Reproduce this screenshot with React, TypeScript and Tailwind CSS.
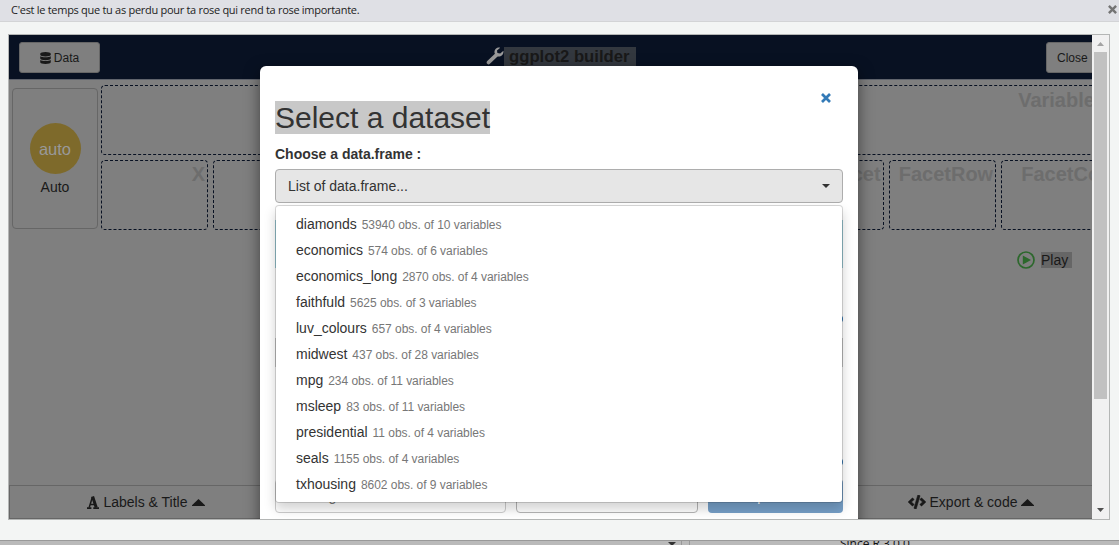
import React from "react";
import { FaDatabase, FaCode } from "react-icons/fa";

const datasets: [string, string][] = [
  ["diamonds", "53940 obs. of 10 variables"],
  ["economics", "574 obs. of 6 variables"],
  ["economics_long", "2870 obs. of 4 variables"],
  ["faithfuld", "5625 obs. of 3 variables"],
  ["luv_colours", "657 obs. of 4 variables"],
  ["midwest", "437 obs. of 28 variables"],
  ["mpg", "234 obs. of 11 variables"],
  ["msleep", "83 obs. of 11 variables"],
  ["presidential", "11 obs. of 4 variables"],
  ["seals", "1155 obs. of 4 variables"],
  ["txhousing", "8602 obs. of 9 variables"],
];

const slots = ["X", "Y", "Fill", "Color", "Size", "Group", "Facet", "FacetRow", "FacetCol"];

function Cross({ className }: { className: string }) {
  return (
    <svg viewBox="0 0 10 10" className={className} fill="none" stroke="currentColor" strokeWidth="2.7">
      <path d="M1 1L9 9M9 1L1 9" />
    </svg>
  );
}

function Triangle() {
  return (
    <svg viewBox="0 0 13 7" className="h-[7px] w-[13px]" fill="currentColor">
      <path d="M6.5 0L13 6.3V7H0V6.3Z" />
    </svg>
  );
}

function Wrench() {
  return (
    <svg viewBox="0 0 18 18" className="size-[18px] text-[#999]" fill="none" stroke="currentColor">
      <path d="M2.6 15.4L10.5 7.8" strokeWidth="3.8" strokeLinecap="round" />
      <path d="M14.2 0.7C11 -0.2 7.8 2.6 8.6 6.3L11.5 9.4C15 10.2 18 7.3 17.4 3.8L14.2 6.6L11.4 6L11 3.4Z" fill="currentColor" stroke="none" />
    </svg>
  );
}

function LetterGlyph() {
  return (
    <svg viewBox="0 0 12 13" className="h-[13px] w-3" fill="none" stroke="currentColor">
      <path d="M5.4 1L2.2 11.5M3.4 8.4H8" strokeWidth="1.5" />
      <path d="M5.6 0.5L9.2 11.5" strokeWidth="3" />
      <path d="M0 12.1H4.4M6.3 12.1H12" strokeWidth="1.7" />
    </svg>
  );
}

function PlayCircle() {
  return (
    <svg viewBox="0 0 18 18" className="mt-px size-[18px] text-[#2c682c]">
      <circle cx="9" cy="9" r="8" fill="none" stroke="currentColor" strokeWidth="1.7" />
      <path d="M5.8 4.6L14 9L5.8 13.6Z" fill="currentColor" />
    </svg>
  );
}

function Builder() {
  return (
    <div className="flex h-full w-[1110px] shrink-0 flex-col bg-[#7f7f7f] text-[14px] leading-5 text-[#191919]">
      <header className="flex h-[45px] shrink-0 items-start border-b border-[#5f636c] bg-[#081122] pt-[7px] pl-[10px]">
        <button className="flex h-[31px] w-[81px] items-center justify-center gap-[3px] rounded-[3px] border border-[#666] bg-[#7f7f7f] text-[12px]">
          <FaDatabase className="h-3 w-[11px]" />
          Data
        </button>
        <div className="ml-[386px] flex w-[150px] shrink-0 items-start pt-[5px]">
          <Wrench />
          <span className="h-5 w-[132px] bg-[#33383f] pl-[5px] text-[16.7px] leading-[19px] font-bold whitespace-nowrap">ggplot2 builder</span>
        </div>
        <button className="ml-[410px] flex h-[31px] w-[63px] items-center rounded-[3px] border border-[#666] bg-[#7f7f7f] pl-[10px] text-[12px]">Close</button>
      </header>
      <div className="flex gap-[3px] pt-[5px] pl-[3px]">
        <div className="mt-[3px] flex h-[141px] w-[86px] shrink-0 flex-col items-center rounded border border-[#666] pt-[34px]">
          <div className="flex size-[51px] items-center justify-center rounded-full bg-[#7e6a2b] text-[16.5px] text-[#999]">auto</div>
          <div className="mt-[3px]">Auto</div>
        </div>
        <div className="flex w-[1008px] flex-col gap-[5px] text-[20px] font-bold text-[#6d6d6d]">
          <div className="h-[70px] rounded border border-dashed border-[#081122] pt-[3px] text-right leading-[22px]">
            <span className="mr-[2px]">Variables</span>
          </div>
          <div className="flex gap-[5px]">
            {slots.map((s) => (
              <div key={s} className="h-[70px] w-[107.6px] shrink-0 rounded border border-dashed border-[#081122] pt-[2px] pr-[2px] text-right leading-[22px] first:w-[107px]">
                {s}
              </div>
            ))}
          </div>
        </div>
      </div>
      <div className="flex grow items-start pt-5 pl-[1008px]">
        <PlayCircle />
        <span className="mt-[2px] ml-[6px] h-4 bg-[#666] pr-1 leading-4">Play</span>
      </div>
      <footer className="flex h-[34px] shrink-0 border border-[#666]">
        <div className="flex w-[272px] items-center justify-center gap-[4.5px]">
          <LetterGlyph />Labels &amp; Title<Triangle />
        </div>
        <div className="grow" />
        <div className="mr-[20px] flex w-[254px] items-center justify-center gap-[4px]">
          <FaCode className="h-[14px] w-[18px]" stroke="currentColor" strokeWidth="20" />Export &amp; code<Triangle />
        </div>
      </footer>
    </div>
  );
}

function Modal() {
  return (
    <div className="absolute top-[31px] left-[251px] h-[620px] w-[598px] rounded-[6px] bg-white px-[15px] text-[14px] leading-5 text-[#333] shadow-[0_5px_15px_rgba(0,0,0,0.5)]">
      <div className="flex h-[35px] items-end justify-end pr-[12.5px]">
        <Cross className="mt-auto mb-[-2px] size-[10px] text-[#337ab7]" />
      </div>
      <h1 className="flex h-[33px]">
        <span className="bg-[#c8c8c8] text-[30px] leading-[33px]">Select a dataset</span>
      </h1>
      <div className="mt-[10px] mb-[5px] font-bold">Choose a data.frame :</div>
      <div className="relative">
        <button className="flex h-[34px] w-full items-center justify-between rounded border border-[#adadad] bg-[#e6e6e6] px-3">
          List of data.frame...
          <svg viewBox="0 0 8 4" className="h-1 w-2" fill="#333"><path d="M0 0H8L4 4Z" /></svg>
        </button>
        <div className="mt-[17px] h-[48px] border border-[#9fd0dc]" />
        <div className="mt-[47px] flex h-2 justify-end"><span className="h-2 w-2 rounded-full bg-[#337ab7]" /></div>
        <div className="mt-[15px] h-[29px] border border-[#ccc]" />
        <div className="mt-[91px] flex h-2 justify-end"><span className="h-2 w-2 rounded-full bg-[#337ab7]" /></div>
        <div className="mt-[13px] flex gap-[10px]">
          <button className="h-[34px] w-[231px] rounded border border-[#ccc] pl-3 text-left text-[#777]">Nothing selected</button>
          <button className="h-[34px] w-[182px] rounded border border-[#b5b5b5]" />
          <button className="h-[34px] w-[135px] rounded bg-[#769fc7] pr-7 text-white">Import</button>
        </div>
        <ul className="absolute top-[36px] left-0 h-[298px] w-full rounded border border-black/15 bg-white bg-clip-padding pt-[5px] shadow-[0_6px_12px_rgba(0,0,0,0.175)]">
          {datasets.map(([name, info]) => (
            <li key={name} className="h-[26px] pt-[3px] pl-5 whitespace-nowrap">
              {name}<span className="pl-[5px] text-[12px] tracking-[-0.04px] text-[#777]">{info}</span>
            </li>
          ))}
        </ul>
      </div>
    </div>
  );
}

export default function App() {
  return (
    <div className="flex h-[545px] w-[1119px] flex-col overflow-hidden bg-[#f3f5f4] font-['Liberation_Sans',Arial,sans-serif]">
      <div className="flex h-[22px] shrink-0 items-center justify-between border-b border-[#d3d4d6] bg-[#dfe0e5] pr-[2px] pl-[11px] font-['Open_Sans','Noto_Sans',sans-serif] text-[11px] text-[#222]">
        <span className="tracking-[-0.29px] whitespace-nowrap">C'est le temps que tu as perdu pour ta rose qui rend ta rose importante.</span>
        <Cross className="mb-[3px] size-[9px] text-[#747474]" />
      </div>
      <div className="mt-3 ml-2 flex h-[486px] w-[1102px] shrink-0 border border-[#b4b6b5]">
        <div className="relative flex w-[1083px] overflow-hidden">
          <Builder />
          <Modal />
        </div>
        <div className="flex w-[17px] flex-col items-center bg-[#f1f1f1]">
          <svg viewBox="0 0 7 4" className="mt-[7px] h-1 w-[7px]" fill="#a3a3a3"><path d="M0 4H7L3.5 0Z" /></svg>
          <div className="mt-[6px] h-[347px] w-[13px] bg-[#c1c1c1]" />
          <svg viewBox="0 0 7 4" className="mt-auto mb-[7px] h-1 w-[7px]" fill="#505050"><path d="M0 0H7L3.5 4Z" /></svg>
        </div>
      </div>
      <div className="mt-5 flex h-[5px] shrink-0 overflow-hidden border-t border-[#999] bg-[#bababa]">
        <div className="flex h-2 w-[682px] justify-end border-r border-[#999] pt-px pr-[5px]">
          <svg viewBox="0 0 8 4" className="h-1 w-2" fill="#333"><path d="M0 0H8L4 4Z" /></svg>
        </div>
        <div className="h-2 w-[8px] border-r border-[#999]" />
        <div className="mt-[-1px] pl-[150px] font-['Open_Sans',sans-serif] text-[12px] leading-[8px] whitespace-nowrap text-[#111]">Since R 3.0.0</div>
      </div>
    </div>
  );
}
